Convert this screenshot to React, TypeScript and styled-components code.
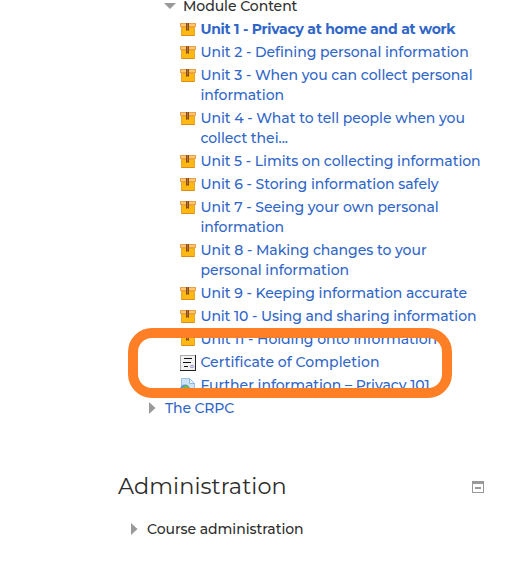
import React from 'react';
import styled, { createGlobalStyle } from 'styled-components';

const GlobalStyle = createGlobalStyle`
  body {
    margin: 0;
    background: #fff;
    color: #2d2d2d;
    font-family: Montserrat, Inter, 'Open Sans', sans-serif;
    font-size: 14px;
    font-weight: 500;
    line-height: 20px;
  }
`;

const Page = styled.main`
  position: relative;
  box-sizing: border-box;
  width: 519px;
  height: 566px;
  overflow: hidden;
`;

const Tree = styled.nav`
  display: flex;
  flex-direction: column;
  gap: 3px;
  margin-top: -4px;
`;

const Branch = styled.div<{ $indent: number; $gap: number }>`
  display: flex;
  align-items: center;
  gap: ${p => p.$gap}px;
  height: 20px;
  padding-left: ${p => p.$indent}px;
`;

const Units = styled.ul`
  display: flex;
  flex-direction: column;
  gap: 3px;
  margin: 0;
  padding: 0 0 0 180px;
  list-style: none;
`;

const Unit = styled.li`
  display: flex;
  align-items: flex-start;
  gap: 4.4px;

  svg {
    flex: none;
    margin-top: 3px;
  }
`;

const Link = styled.a<{ $bold?: boolean; $tracking?: number }>`
  color: #2f66c8;
  font-weight: ${p => (p.$bold ? 700 : 500)};
  letter-spacing: ${p => p.$tracking ?? -0.04}px;
  white-space: pre-line;
`;

const Label = styled.span`
  letter-spacing: -0.05px;
`;

const BlockHeader = styled.header`
  display: flex;
  align-items: center;
  justify-content: space-between;
  height: 30px;
  margin: 53px 35px 0 118px;

  svg {
    margin-top: 2px;
  }
`;

const Title = styled.h2`
  margin: 0;
  font-size: 22.4px;
  font-weight: 450;
  line-height: 30px;
  letter-spacing: 0.08px;
`;

const AdminRow = styled(Branch)`
  margin-top: 18px;
`;

const Highlight = styled.div`
  position: absolute;
  left: 128px;
  top: 328px;
  box-sizing: border-box;
  width: 324px;
  height: 70px;
  border: 10px solid #ff7f27;
  border-radius: 24px;
`;

const Down = () => (
  <svg width="12" height="6" viewBox="0 0 12 6">
    <path d="M0 0h12L6 6z" fill="#999" />
  </svg>
);

const Right = () => (
  <svg width="7" height="12" viewBox="0 0 7 12">
    <path d="M0 0v12l6.5-6z" fill="#999" />
  </svg>
);

const Package = () => (
  <svg width="16" height="16" viewBox="0 0 16 16">
    <path d="M1 5h14v9H1z" fill="#fdb913" />
    <path d="M1 13h14v1H1z" fill="#e08a1c" />
    <path d="M1 5h1v9H1zM14 5h1v9h-1z" fill="#eea32c" />
    <path d="M0 1h16v4H0z" fill="#e9a050" />
    <path d="M1 2h14v2H1z" fill="#fcc66a" />
    <path d="M1 5h14v1H1z" fill="#f0a81c" />
    <path d="M6 1h3v8l-1.5-1L6 9z" fill="#8b4b17" />
    <path d="M7 1h1v6H7z" fill="#b0743a" />
  </svg>
);

const Certificate = () => (
  <svg width="16" height="16" viewBox="0 0 16 16">
    <path d="M0 0h16v16H0z" fill="#aaa" />
    <path d="M1 1h14v14H1z" fill="#f2f2f2" />
    <path d="M15 0h1v16H0v-1h15z" fill="#222" />
    <path d="M4 3h8v1H4zM3 7h8v1H3zM4 11h4v1H4z" fill="#111" />
    <ellipse cx="12" cy="11.5" rx="1.7" ry="1.2" fill="#ddddfa" stroke="#9a9ad2" />
  </svg>
);

const WebPage = () => (
  <svg width="16" height="16" viewBox="0 0 16 16">
    <path d="M1.5.5h8l5 5v10h-13z" fill="#cfe3f8" stroke="#9bc0e8" />
    <path d="M9.5.5v5h5z" fill="#eef6fe" stroke="#8fb7e3" />
    <circle cx="5" cy="11.5" r="5" fill="#5b93d5" />
    <path d="M3 9l3-2 3 2 .5 3-3 1-1 3-3-3z" fill="#75b843" />
  </svg>
);

const Collapse = () => (
  <svg width="12" height="12" viewBox="0 0 12 12">
    <path d="M0 0h12v12H0zM1 3v8h10V3z" fill="#999" fillRule="evenodd" />
    <path d="M3 6h6v2H3z" fill="#999" />
  </svg>
);

type UnitItem = {
  text: string;
  bold?: boolean;
  tracking?: number;
  icon?: React.ReactNode;
};

const units: UnitItem[] = [
  { text: 'Unit 1 - Privacy at home and at work', bold: true, tracking: -0.27 },
  { text: 'Unit 2 - Defining personal information' },
  { text: 'Unit 3 - When you can collect personal\ninformation' },
  { text: 'Unit 4 - What to tell people when you\ncollect thei...' },
  { text: 'Unit 5 - Limits on collecting information', tracking: -0.06 },
  { text: 'Unit 6 - Storing information safely' },
  { text: 'Unit 7 - Seeing your own personal\ninformation' },
  { text: 'Unit 8 - Making changes to your\npersonal information' },
  { text: 'Unit 9 - Keeping information accurate' },
  { text: 'Unit 10 - Using and sharing information', tracking: -0.08 },
  { text: 'Unit 11 - Holding onto information', tracking: -0.06 },
  { text: 'Certificate of Completion', tracking: 0.04, icon: <Certificate /> },
  { text: 'Further information – Privacy 101', icon: <WebPage /> },
];

export default function App() {
  return (
    <Page>
      <GlobalStyle />
      <Tree>
        <Branch $indent={164} $gap={7}>
          <Down />
          <Label>Module Content</Label>
        </Branch>
        <Units>
          {units.map(u => (
            <Unit key={u.text}>
              {u.icon ?? <Package />}
              <Link $bold={u.bold} $tracking={u.tracking}>{u.text}</Link>
            </Unit>
          ))}
        </Units>
        <Branch $indent={149} $gap={9}>
          <Right />
          <Link $tracking={-0.15}>The CRPC</Link>
        </Branch>
      </Tree>
      <BlockHeader>
        <Title>Administration</Title>
        <Collapse />
      </BlockHeader>
      <AdminRow $indent={131} $gap={9}>
        <Right />
        <Label>Course administration</Label>
      </AdminRow>
      <Highlight />
    </Page>
  );
}
